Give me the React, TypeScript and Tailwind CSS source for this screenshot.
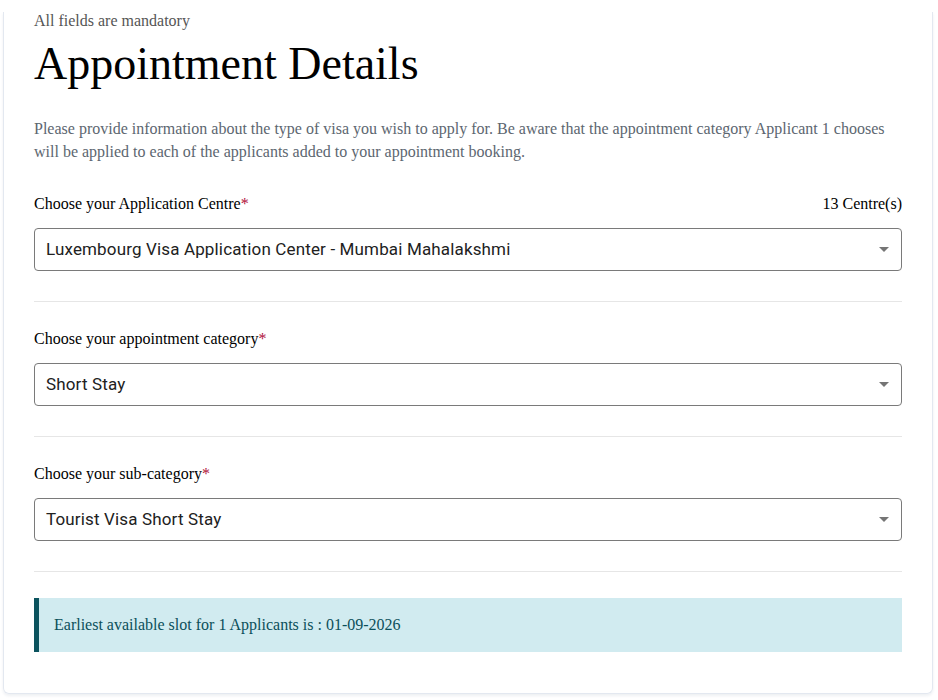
const serif = { fontFamily: '"Liberation Serif", "Times New Roman", serif' };

function Caret() {
  return (
    <svg width="10" height="5" viewBox="0 0 10 5" className="shrink-0">
      <path d="M0 0h10L5 5z" fill="#757575" />
    </svg>
  );
}

function Field({ label, value, extra }: { label: string; value: string; extra?: string }) {
  return (
    <div>
      <div className="flex items-center justify-between h-[22px] text-[16px] text-black mb-[13px]">
        <span>
          {label}
          <span className="text-[#b0103a]">*</span>
        </span>
        {extra && <span>{extra}</span>}
      </div>
      <div className="h-[43px] border border-[#7a7a7a] rounded-[4px] flex items-center justify-between pl-[11px] pr-[12px]">
        <span
          className="text-[17px] text-[#212121] tracking-[0.15px]"
          style={{ fontFamily: 'Roboto, "Liberation Sans", sans-serif' }}
        >
          {value}
        </span>
        <Caret />
      </div>
      <div className="h-px bg-[#e6e6e6] mt-[30px] mb-[26px]" />
    </div>
  );
}

export default function App() {
  return (
    <div className="bg-white min-h-[700px] pt-3 px-[3px]" style={serif}>
      <div className="w-[930px] border-x border-b border-[#e3e8f0] rounded-b-[6px] shadow-[0_2px_3px_rgba(40,60,100,0.08)] px-[30px] pb-[41px]">
        <p className="text-[16px] leading-[17px] text-[#555]">All fields are mandatory</p>
        <h1 className="text-[46px] leading-[58px] text-black mt-[6px]">Appointment Details</h1>
        <p className="text-[16px] leading-[23px] text-[#5c6670] mt-[24px] mb-[30px]">
          Please provide information about the type of visa you wish to apply for. Be aware that the appointment
          category Applicant 1 chooses will be applied to each of the applicants added to your appointment booking.
        </p>

        <Field
          label="Choose your Application Centre"
          value="Luxembourg Visa Application Center - Mumbai Mahalakshmi"
          extra="13 Centre(s)"
        />
        <Field label="Choose your appointment category" value="Short Stay" />
        <Field label="Choose your sub-category" value="Tourist Visa Short Stay" />

        <div className="h-[54px] bg-[#d1ebf0] border-l-[5px] border-[#0b535e] flex items-center pl-[15px] text-[16px] text-[#0b4f5a]">
          Earliest available slot for 1 Applicants is : 01-09-2026
        </div>
      </div>
    </div>
  );
}
